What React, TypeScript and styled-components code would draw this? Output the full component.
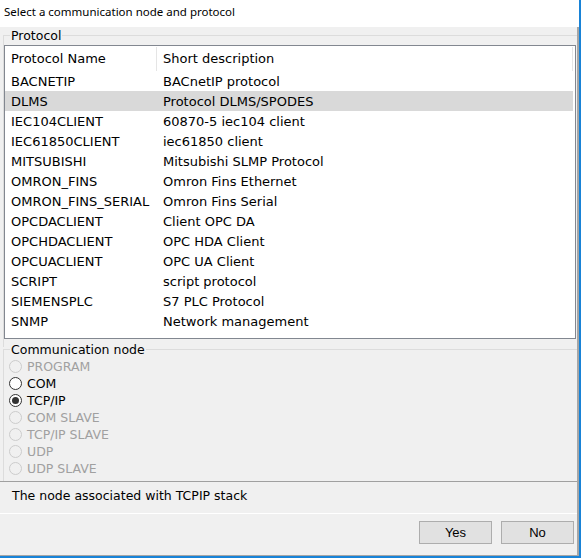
import React, { useState } from "react";
import styled, { createGlobalStyle } from "styled-components";

const GlobalStyle = createGlobalStyle`
  html, body {
    margin: 0;
    padding: 0;
    background: #ffffff;
  }
  * { box-sizing: border-box; }
`;

const protocols = [
  ["BACNETIP", "BACnetIP protocol"],
  ["DLMS", "Protocol DLMS/SPODES"],
  ["IEC104CLIENT", "60870-5 iec104 client"],
  ["IEC61850CLIENT", "iec61850 client"],
  ["MITSUBISHI", "Mitsubishi SLMP Protocol"],
  ["OMRON_FINS", "Omron Fins Ethernet"],
  ["OMRON_FINS_SERIAL", "Omron Fins Serial"],
  ["OPCDACLIENT", "Client OPC DA"],
  ["OPCHDACLIENT", "OPC HDA Client"],
  ["OPCUACLIENT", "OPC UA Client"],
  ["SCRIPT", "script protocol"],
  ["SIEMENSPLC", "S7 PLC Protocol"],
  ["SNMP", "Network management"],
];

const nodes = [
  { name: "PROGRAM", enabled: false },
  { name: "COM", enabled: true },
  { name: "TCP/IP", enabled: true },
  { name: "COM SLAVE", enabled: false },
  { name: "TCP/IP SLAVE", enabled: false },
  { name: "UDP", enabled: false },
  { name: "UDP SLAVE", enabled: false },
];

export default function App() {
  const [selected, setSelected] = useState(1);
  const [node, setNode] = useState("TCP/IP");

  return (
    <>
      <GlobalStyle />
      <Frame>
        <Header>Select a communication node and protocol</Header>
        <Body>
          <GroupBox>
            <Legend>Protocol</Legend>
            <ListView>
              <ListHeader>
                <HeaderCell $width={152}>Protocol Name</HeaderCell>
                <HeaderCell $width={416}>Short description</HeaderCell>
              </ListHeader>
              {protocols.map(([name, desc], i) => (
                <Row key={name} $selected={i === selected} onClick={() => setSelected(i)}>
                  <Cell $width={152}>{name}</Cell>
                  <Cell $width={416}>{desc}</Cell>
                </Row>
              ))}
            </ListView>
          </GroupBox>

          <NodeBox>
            <Legend>Communication node</Legend>
            <RadioList>
              {nodes.map((n) => (
                <RadioRow
                  key={n.name}
                  $enabled={n.enabled}
                  onClick={() => n.enabled && setNode(n.name)}
                >
                  <RadioCircle $enabled={n.enabled}>
                    {node === n.name && <RadioDot />}
                  </RadioCircle>
                  {n.name}
                </RadioRow>
              ))}
            </RadioList>
          </NodeBox>

          <Status>The node associated with TCPIP stack</Status>

          <ButtonBar>
            <Button>Yes</Button>
            <Button>No</Button>
          </ButtonBar>
        </Body>
      </Frame>
    </>
  );
}

const Frame = styled.div`
  width: 581px;
  height: 558px;
  display: flex;
  flex-direction: column;
  background: #ffffff;
  border-right: 2px solid #1883d7;
  border-bottom: 2px solid #1883d7;
`;

const Header = styled.div`
  height: 27px;
  padding: 4px 0 0 4px;
  font-family: "Noto Sans", sans-serif;
  font-size: 11.5px;
  line-height: 16px;
  color: #000000;
  background: #ffffff;
`;

const Body = styled.div`
  flex: 1;
  display: flex;
  flex-direction: column;
  background: #f0f0f0;
  border-right: 2px solid #a6a6a6;
  border-bottom: 1px solid #a6a6a6;
  font-family: "DejaVu Sans", sans-serif;
  font-size: 13px;
  color: #000000;
`;

const GroupBox = styled.div`
  position: relative;
  height: 312px;
  margin: 8px 0 0 3px;
  border-top: 1px solid #dcdcdc;
  border-left: 1px solid #dcdcdc;
  padding: 9px 0 0 0;
`;

const Legend = styled.div`
  position: absolute;
  top: -8px;
  left: 6px;
  padding: 0 1px;
  background: #f0f0f0;
  font-size: 12.5px;
  line-height: 15px;
  color: #000000;
`;

const ListView = styled.div`
  width: 572px;
  height: 294px;
  background: #ffffff;
  border: 1px solid #828790;
  overflow: hidden;
`;

const ListHeader = styled.div`
  display: flex;
  height: 25px;
  align-items: center;
`;

const HeaderCell = styled.div<{ $width: number }>`
  width: ${(p) => p.$width}px;
  height: 24px;
  display: flex;
  align-items: center;
  padding-left: 6px;
  border-right: 1px solid #e5e5e5;
`;

const Row = styled.div<{ $selected: boolean }>`
  display: flex;
  height: 20px;
  align-items: center;
  width: 568px;
  background: ${(p) => (p.$selected ? "#d9d9d9" : "transparent")};
  cursor: default;
`;

const Cell = styled.div<{ $width: number }>`
  width: ${(p) => p.$width}px;
  padding-left: 6px;
  white-space: nowrap;
`;

const NodeBox = styled.div`
  position: relative;
  margin: 2px 0 0 3px;
  height: 132px;
  border-top: 1px solid #dcdcdc;
  border-left: 1px solid #dcdcdc;
  padding: 8px 0 0 5px;
`;

const RadioList = styled.div`
  display: flex;
  flex-direction: column;
`;

const RadioRow = styled.div<{ $enabled: boolean }>`
  height: 17px;
  display: flex;
  align-items: center;
  gap: 5px;
  color: ${(p) => (p.$enabled ? "#000000" : "#a0a0a0")};
  font-size: 12.5px;
`;

const RadioCircle = styled.span<{ $enabled: boolean }>`
  width: 13px;
  height: 13px;
  border-radius: 50%;
  border: 1px solid ${(p) => (p.$enabled ? "#333333" : "#cccccc")};
  background: ${(p) => (p.$enabled ? "#ffffff" : "#f0f0f0")};
  display: flex;
  align-items: center;
  justify-content: center;
`;

const RadioDot = styled.span`
  width: 7px;
  height: 7px;
  border-radius: 50%;
  background: #333333;
`;

const Status = styled.div`
  height: 33px;
  border-top: 1px solid #a0a0a0;
  border-bottom: 1px solid #ffffff;
  padding: 0 0 4px 12px;
  display: flex;
  align-items: center;
  font-size: 12.5px;
`;

const ButtonBar = styled.div`
  flex: 1;
  display: flex;
  justify-content: flex-end;
  align-items: flex-start;
  gap: 9px;
  padding: 7px 3px 0 0;
`;

const Button = styled.button`
  width: 73px;
  height: 23px;
  background: #e1e1e1;
  border: 1px solid #adadad;
  font-family: "Liberation Sans", sans-serif;
  font-size: 13px;
  color: #000000;
  padding: 0;
`;
